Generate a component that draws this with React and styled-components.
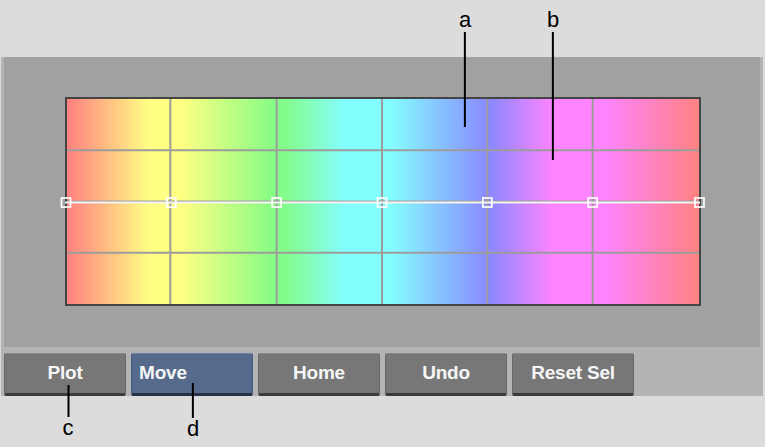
import React from "react";
import styled, { createGlobalStyle } from "styled-components";

const GlobalStyle = createGlobalStyle`
  html, body {
    margin: 0;
    padding: 0;
    background: #dcdcdc;
  }
  body {
    font-family: "Liberation Sans", Arial, sans-serif;
  }
`;

const Page = styled.div`
  position: relative;
  width: 765px;
  height: 447px;
  padding-top: 57px;
  box-sizing: border-box;
  background: #dcdcdc;
  overflow: hidden;
`;

const Frame = styled.div`
  width: 762px;
  margin-left: 1px;
  padding: 0 3px;
  box-sizing: border-box;
  background: #b4b4b4;
`;

const Canvas = styled.div`
  height: 290px;
  padding: 40px 0 0 61px;
  box-sizing: border-box;
  background: #a1a1a1;
`;

const Graph = styled.div`
  position: relative;
  width: 636px;
  height: 209px;
  box-sizing: border-box;
  border: 2px solid #444;
  background: linear-gradient(
    to right,
    #ff8080 0%,
    #ffff84 13%,
    #ffff84 18%,
    #84fc84 33%,
    #84fc90 35%,
    #84ffff 44%,
    #84ffff 51%,
    #8a88ff 66.8%,
    #ff84ff 77%,
    #ff84ff 85%,
    #ff8282 100%
  );
  svg {
    position: absolute;
    left: 0;
    top: 0;
    overflow: visible;
  }
`;

const ButtonBar = styled.div`
  display: flex;
  gap: 5px;
  height: 49px;
  padding-top: 6px;
  box-sizing: border-box;
`;

const Button = styled.div`
  width: 122px;
  height: 43px;
  box-sizing: border-box;
  display: flex;
  align-items: center;
  justify-content: ${(p) => (p.$left ? "flex-start" : "center")};
  padding: 0 ${(p) => (p.$left ? "7px" : "0")} 1px;
  border-radius: 2px;
  background: ${(p) => (p.$active ? "#566a8b" : "#777777")};
  border-top: 1px solid ${(p) => (p.$active ? "#6c80a2" : "#868686")};
  border-left: 1px solid ${(p) => (p.$active ? "#4a5c7c" : "#666")};
  border-right: 1px solid ${(p) => (p.$active ? "#4a5c7c" : "#666")};
  border-bottom: 3px solid ${(p) => (p.$active ? "#27314a" : "#3b3b3b")};
  color: #f6f6f6;
  font-family: "Liberation Sans", Arial, sans-serif;
  font-weight: 700;
  font-size: 19px;
  letter-spacing: -0.2px;
`;

const Callout = styled.div`
  position: absolute;
  left: ${(p) => p.$x}px;
  top: ${(p) => p.$y}px;
  transform: translateX(-50%);
  display: flex;
  flex-direction: column;
  align-items: center;
`;

const Letter = styled.span`
  font-family: "Liberation Sans", Arial, sans-serif;
  font-size: 22px;
  line-height: 22px;
  color: #000;
`;

const Leader = styled.div`
  width: 2px;
  height: ${(p) => p.$len}px;
  background: #000;
  margin-top: ${(p) => p.$gap || 0}px;
`;

const W = 632;
const H = 205;
const cols = 6;
const rows = 4;

function CurveChart() {
  const xs = Array.from({ length: cols + 1 }, (_, i) => (i * W) / cols);
  const ys = Array.from({ length: rows - 1 }, (_, i) => ((i + 1) * H) / rows);
  const curveY = 103.5;
  return (
    <svg width={W} height={H} viewBox={`0 0 ${W} ${H}`}>
      {xs.slice(1, -1).map((x, i) => (
        <line
          key={x}
          x1={x - (i === 0 ? 2 : 1)}
          y1={0}
          x2={x - (i === 0 ? 2 : 1)}
          y2={H}
          stroke="#9c9c9c"
          strokeWidth="2"
        />
      ))}
      {ys.map((y) => (
        <line key={y} x1={0} y1={y} x2={W} y2={y} stroke="#9c9c9c" strokeWidth="2" />
      ))}
      <line x1={-2} y1={curveY} x2={W + 1} y2={curveY} stroke="#f4f4f4" strokeWidth="2" />
      {xs.map((x, i) => {
        const cx = i === 0 ? -1 : i === cols ? W + 0.5 : x - 1;
        return (
          <rect
            key={i}
            x={cx - 4.5}
            y={curveY - 4.5}
            width={9}
            height={9}
            fill="none"
            stroke="#fff"
            strokeWidth="1.7"
          />
        );
      })}
    </svg>
  );
}

const buttons = [
  { label: "Plot" },
  { label: "Move", active: true, left: true },
  { label: "Home" },
  { label: "Undo" },
  { label: "Reset Sel" },
];

export default function App() {
  return (
    <>
      <GlobalStyle />
      <Page>
        <Frame>
          <Canvas>
            <Graph>
              <CurveChart />
            </Graph>
          </Canvas>
          <ButtonBar>
            {buttons.map((b) => (
              <Button key={b.label} $active={b.active} $left={b.left}>
                {b.label}
              </Button>
            ))}
          </ButtonBar>
        </Frame>

        <Callout $x={465} $y={9}>
          <Letter>a</Letter>
          <Leader $len={95} $gap={1} />
        </Callout>
        <Callout $x={553} $y={9}>
          <Letter>b</Letter>
          <Leader $len={128} $gap={1} />
        </Callout>
        <Callout $x={68} $y={385}>
          <Leader $len={32} />
          <Letter>c</Letter>
        </Callout>
        <Callout $x={193} $y={383}>
          <Leader $len={35} />
          <Letter>d</Letter>
        </Callout>
      </Page>
    </>
  );
}
